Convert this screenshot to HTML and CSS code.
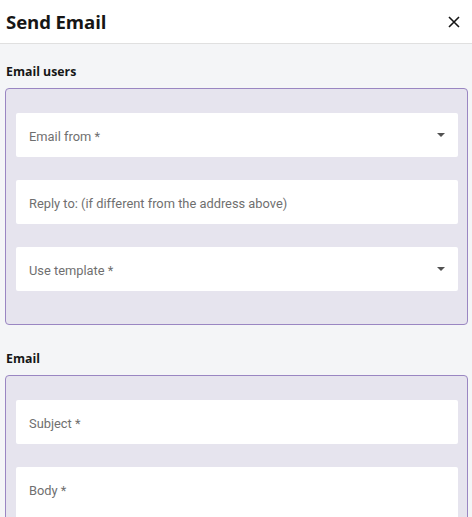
FILE: index.html
```html
<!DOCTYPE html>
<html>
<head>
<meta charset="utf-8">
<link rel="stylesheet" href="styles.css">
</head>
<body>
<div class="header">
  <h1 class="title">Send Email</h1>
  <button class="close" aria-label="Close">
    <svg width="12" height="12" viewBox="0 0 12 12"><path d="M1 1L11 11M11 1L1 11" stroke="#161616" stroke-width="1.6" fill="none"/></svg>
  </button>
</div>
<div class="content">
  <div class="section-label">Email users</div>
  <div class="group">
    <div class="field select"><span class="ph">Email from *</span><span class="caret"></span></div>
    <div class="field"><span class="ph">Reply to: (if different from the address above)</span></div>
    <div class="field select"><span class="ph">Use template *</span><span class="caret"></span></div>
  </div>
  <div class="section-label second">Email</div>
  <div class="group">
    <div class="field"><span class="ph">Subject *</span></div>
    <div class="field body-field"><span class="ph">Body *</span></div>
  </div>
</div>
</body>
</html>
```
FILE: styles.css
```css
html, body { margin: 0; padding: 0; }
body {
  width: 472px;
  height: 517px;
  overflow: hidden;
  background: #f4f5f7;
  font-family: "Open Sans", "Noto Sans", sans-serif;
  color: #161616;
}
.header {
  height: 43px;
  background: #ffffff;
  border-bottom: 1px solid #e0e0e0;
  display: flex;
  align-items: center;
  justify-content: space-between;
  padding: 0 12px 0 6px;
}
.title {
  margin: 0;
  font-size: 18.6px;
  font-weight: 700;
  letter-spacing: -0.1px;
}
.close {
  border: 0;
  background: none;
  padding: 0;
  width: 12px;
  height: 12px;
  display: flex;
}
.content {
  padding: 19px 4px 0 5px;
}
.section-label {
  font-size: 12.3px;
  font-weight: 700;
  line-height: 17px;
  padding-left: 1px;
  margin-bottom: 8px;
}
.section-label.second { margin-top: 25px; }
.group {
  background: #e6e4ee;
  border: 1px solid #9a86c2;
  border-radius: 4px;
  padding: 24px 9px 10px 10px;
  display: flex;
  flex-direction: column;
  gap: 23px;
}
.field {
  height: 44px;
  box-sizing: border-box;
  background: #ffffff;
  border-radius: 2px;
  display: flex;
  align-items: center;
  padding: 3px 13px 0 13px;
  justify-content: space-between;
}
.group .field:last-child { margin-bottom: 23px; }
.field.body-field {
  height: 120px;
  align-items: flex-start;
  padding-top: 15px;
}
.ph {
  font-family: "Roboto", "Lato", sans-serif;
  font-size: 12.85px;
  line-height: 18px;
  color: #6f6f6f;
}
.caret {
  width: 0;
  height: 0;
  border-left: 4px solid transparent;
  border-right: 4px solid transparent;
  border-top: 4px solid #525252;
  margin-top: -3px;
}
```
